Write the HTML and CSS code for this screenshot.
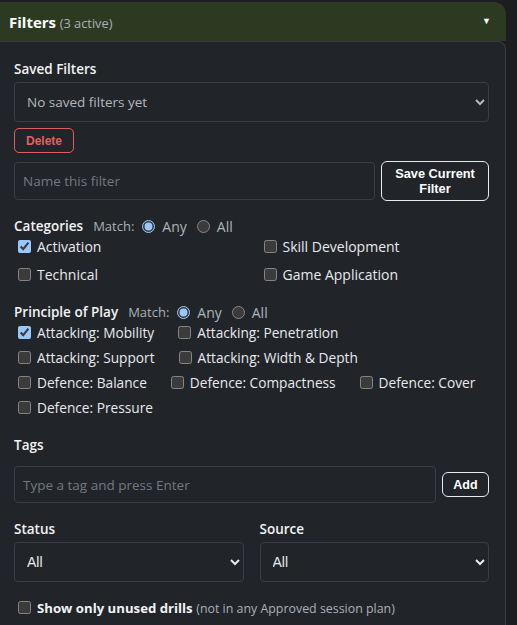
FILE: index.html
```html
<!DOCTYPE html>
<html lang="en">
<head>
<meta charset="utf-8">
<title>Filters</title>
<link rel="stylesheet" href="styles.css">
</head>
<body>
<div class="wrap">
  <div class="head">
    <div class="head-title"><span class="head-main">Filters</span> <span class="head-count">(3 active)</span></div>
    <span class="head-caret">&#9660;</span>
  </div>
  <div class="panel">
    <div class="label first">Saved Filters</div>
    <select class="select saved">
      <option>No saved filters yet</option>
    </select>
    <button class="btn btn-danger">Delete</button>
    <div class="save-row">
      <input class="input" type="text" placeholder="Name this filter">
      <button class="btn btn-save">Save Current<br>Filter</button>
    </div>

    <div class="match-row">
      <span class="label-inline">Categories</span>
      <span class="match">Match:</span>
      <label class="radio"><input type="radio" name="cm" checked><span>Any</span></label>
      <label class="radio"><input type="radio" name="cm"><span>All</span></label>
    </div>
    <div class="cat-grid">
      <label class="check"><input type="checkbox" checked><span>Activation</span></label>
      <label class="check"><input type="checkbox"><span>Skill Development</span></label>
      <label class="check"><input type="checkbox"><span>Technical</span></label>
      <label class="check"><input type="checkbox"><span>Game Application</span></label>
    </div>

    <div class="match-row pop">
      <span class="label-inline">Principle of Play</span>
      <span class="match">Match:</span>
      <label class="radio"><input type="radio" name="pm" checked><span>Any</span></label>
      <label class="radio"><input type="radio" name="pm"><span>All</span></label>
    </div>
    <div class="pop-list">
      <label class="check"><input type="checkbox" checked><span>Attacking: Mobility</span></label>
      <label class="check"><input type="checkbox"><span>Attacking: Penetration</span></label>
      <label class="check"><input type="checkbox"><span>Attacking: Support</span></label>
      <label class="check"><input type="checkbox"><span>Attacking: Width &amp; Depth</span></label>
      <label class="check"><input type="checkbox"><span>Defence: Balance</span></label>
      <label class="check"><input type="checkbox"><span>Defence: Compactness</span></label>
      <label class="check"><input type="checkbox"><span>Defence: Cover</span></label>
      <label class="check"><input type="checkbox"><span>Defence: Pressure</span></label>
    </div>

    <div class="label tags">Tags</div>
    <div class="tag-row">
      <input class="input tag-input" type="text" placeholder="Type a tag and press Enter">
      <button class="btn btn-add">Add</button>
    </div>

    <div class="two-col">
      <div>
        <div class="label">Status</div>
        <select class="select plain"><option>All</option></select>
      </div>
      <div>
        <div class="label">Source</div>
        <select class="select plain"><option>All</option></select>
      </div>
    </div>

    <label class="check unused"><input type="checkbox"><span><b>Show only unused drills</b> <span class="muted">(not in any Approved session plan)</span></span></label>
  </div>
</div>
</body>
</html>
```

FILE: styles.css
```css
html, body {
  margin: 0;
  padding: 0;
  background: #1b1d20;
  color-scheme: dark;
}
body {
  font-family: "Open Sans", "Noto Sans", sans-serif;
  color: #e6e8ea;
  font-size: 14px;
}
.wrap {
  width: 506px;
  padding-top: 2px;
}
.head {
  height: 39px;
  background: #2d3a22;
  border-radius: 0 12px 0 0;
  display: flex;
  align-items: center;
  justify-content: space-between;
  padding: 0 15px 0 9px;
  box-sizing: border-box;
}
.head-main {
  font-weight: 700;
  font-size: 15px;
  color: #ffffff;
}
.head-count {
  font-size: 12.8px;
  color: #a9b0b8;
}
.head-caret {
  font-size: 9px;
  color: #ffffff;
  margin-top: -2px;
}
.panel {
  background: #212429;
  border: 1px solid #383c42;
  border-left: none;
  border-bottom: none;
  border-radius: 0 8px 0 0;
  padding: 18px 16px 20px 14px;
  min-height: 560px;
}
.label {
  font-weight: 600;
  font-size: 13.5px;
  line-height: 18px;
  color: #f1f3f5;
  margin-bottom: 4px;
}
.select {
  display: block;
  width: 100%;
  height: 40px;
  background-color: #212429;
  border: 1px solid #3a3e44;
  border-radius: 4px;
  color: #e8eaed;
  padding: 0 8px;
  box-sizing: border-box;
  font-family: "Liberation Sans", Arial, sans-serif;
  font-size: 14px;
}
.select.saved {
  font-family: "Open Sans", sans-serif;
  color: #b4b8bd;
  font-size: 13.5px;
}
.btn {
  background: transparent;
  font-family: "Liberation Sans", Arial, sans-serif;
  font-weight: 700;
  font-size: 12px;
  cursor: pointer;
}
.btn-danger {
  display: block;
  margin-top: 6px;
  height: 25px;
  width: 60px;
  border: 1px solid #dc5f5d;
  color: #e0615e;
  border-radius: 5px;
  padding: 0;
}
.save-row {
  display: flex;
  align-items: center;
  gap: 6px;
  margin-top: 8px;
}
.input {
  height: 38px;
  flex: 1;
  background: #212429;
  border: 1px solid #3a3e44;
  border-radius: 4px;
  color: #e8eaed;
  padding: 0 8px;
  box-sizing: border-box;
  font-family: "Open Sans", sans-serif;
  font-size: 13.5px;
}
.input::placeholder {
  color: #737980;
}
.btn-save {
  width: 108px;
  height: 40px;
  border: 1px solid #e8eaed;
  color: #ffffff;
  border-radius: 6px;
  padding: 0;
  line-height: 15px;
  font-size: 12.8px;
}
.match-row {
  display: flex;
  align-items: center;
  margin-top: 15px;
  height: 20px;
}
.match-row.pop {
  margin-top: 18px;
}
.label-inline {
  font-weight: 600;
  font-size: 13.5px;
  color: #f1f3f5;
  margin-right: 10px;
}
.match {
  font-size: 13px;
  color: #aab1b8;
  margin-right: 4px;
}
.radio {
  display: flex;
  align-items: center;
  font-size: 14px;
  color: #aeb5bc;
}
.radio input {
  margin: 0 7px 0 4px;
  width: 13px;
  height: 13px;
}
.radio span {
  margin-right: 6px;
}
.check {
  display: flex;
  align-items: center;
  height: 20px;
  font-size: 13.7px;
  color: #e8eaed;
}
.check input {
  margin: 0 6px 0 4px;
  width: 13px;
  height: 13px;
}
.cat-grid .check {
  font-size: 14px;
}
.cat-grid {
  display: grid;
  grid-template-columns: 1fr 1fr;
  column-gap: 16px;
  row-gap: 8px;
}
.pop-list {
  display: flex;
  flex-wrap: wrap;
  column-gap: 20px;
  row-gap: 5px;
  margin-top: 0;
}
.label.tags {
  margin-top: 19px;
  margin-bottom: 12px;
}
.tag-row {
  display: flex;
  align-items: center;
  gap: 6px;
}
.tag-input {
  height: 37px;
}
.btn-add {
  width: 47px;
  height: 25px;
  border: 1px solid #e8eaed;
  color: #ffffff;
  border-radius: 6px;
  padding: 0;
  font-size: 12.5px;
}
.two-col {
  display: grid;
  grid-template-columns: 1fr 1fr;
  column-gap: 16px;
  margin-top: 17px;
}
.check.unused {
  margin-top: 15px;
}
.check.unused b {
  font-weight: 700;
  font-size: 13.2px;
  color: #f1f3f5;
}
.muted {
  color: #aab1b8;
  font-size: 12.4px;
}
```
